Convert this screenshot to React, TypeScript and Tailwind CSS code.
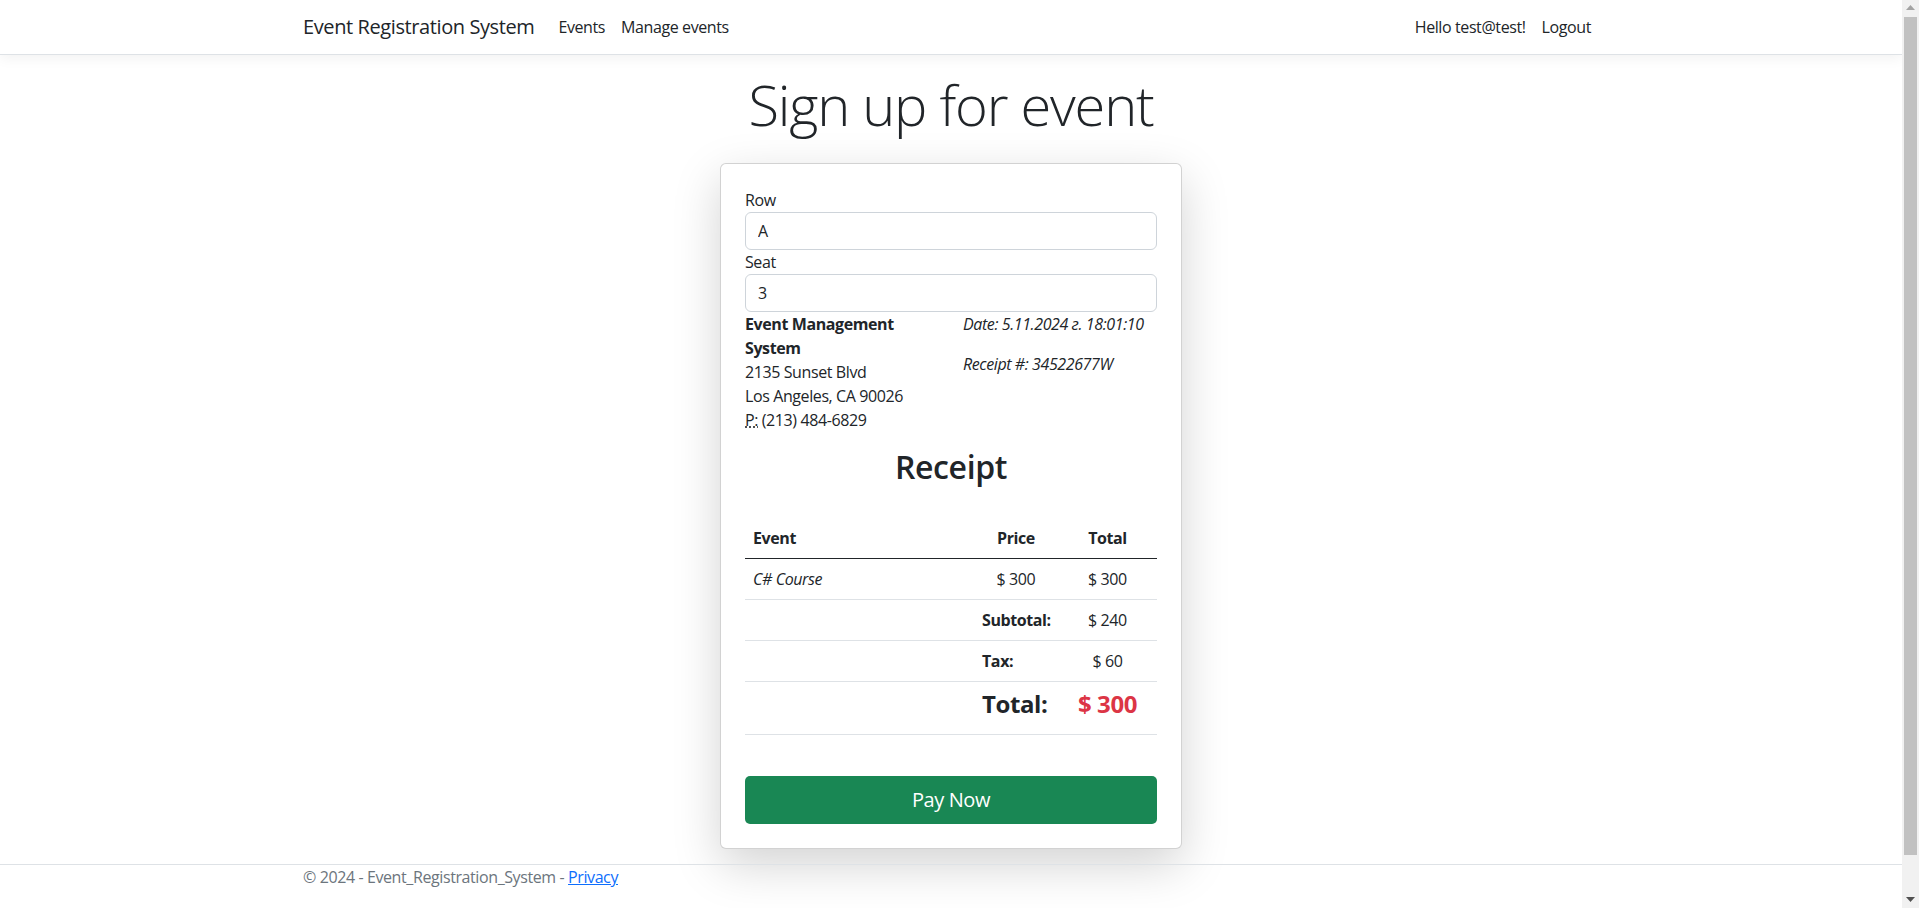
import React from 'react';

const rows = [
  { event: 'C# Course', price: '$ 300', total: '$ 300' },
];

function Navbar() {
  return (
    <nav className="h-[55px] shrink-0 border-b border-[#dee2e6] bg-white shadow-[0_4px_12px_rgba(0,0,0,0.05)]">
      <div className="mx-auto flex h-full w-[1320px] items-center px-3">
        <a className="mr-4 py-[5px] text-[20px] leading-[30px] text-[#212529]">Event Registration System</a>
        <a className="px-2 text-base leading-6 text-[#212529]">Events</a>
        <a className="px-2 text-base leading-6 text-[#212529]">Manage events</a>
        <div className="ml-auto flex items-center">
          <a className="px-2 text-base leading-6 text-[#212529]">Hello test@test!</a>
          <a className="px-2 text-base leading-6 text-[#212529]">Logout</a>
        </div>
      </div>
    </nav>
  );
}

function Field({ label, value }: { label: string; value: string }) {
  return (
    <div>
      <label className="block text-base leading-6">{label}</label>
      <input
        readOnly
        defaultValue={value}
        className="block h-[38px] w-full rounded-md border border-[#ced4da] bg-white px-3 text-base leading-6 text-[#212529] outline-none"
      />
    </div>
  );
}

function ReceiptCard() {
  return (
    <div className="w-[462px] rounded-md border border-black/[0.175] bg-white p-6 shadow-[0_1rem_3rem_rgba(0,0,0,0.175)]">
      <Field label="Row" value="A" />
      <Field label="Seat" value="3" />

      <div className="grid grid-cols-2 gap-x-6">
        <address className="mb-4 not-italic leading-6">
          <strong className="font-bold">Event Management System</strong>
          <br />
          2135 Sunset Blvd
          <br />
          Los Angeles, CA 90026
          <br />
          <abbr title="Phone" className="underline decoration-dotted">P:</abbr> (213) 484-6829
        </address>
        <div className="leading-6">
          <p className="mb-4 italic">Date: 5.11.2024 г. 18:01:10</p>
          <p className="mb-4 italic">Receipt #: 34522677W</p>
        </div>
      </div>

      <h2 className="mb-[31px] text-center text-[32px] font-semibold leading-[1.2]">Receipt</h2>

      <table className="w-full table-fixed border-collapse">
        <thead>
          <tr>
            <th className="w-[229px] border-b border-[#212529] p-2 text-left font-bold leading-6">Event</th>
            <th className="w-[84px] border-b border-[#212529] p-2 text-center font-bold leading-6">Price</th>
            <th className="border-b border-[#212529] p-2 text-center font-bold leading-6">Total</th>
          </tr>
        </thead>
        <tbody>
          {rows.map(r => (
            <tr key={r.event}>
              <td className="border-b border-[#dee2e6] p-2 leading-6 italic">{r.event}</td>
              <td className="border-b border-[#dee2e6] p-2 text-center leading-6">{r.price}</td>
              <td className="border-b border-[#dee2e6] p-2 text-center leading-6">{r.total}</td>
            </tr>
          ))}
          <tr>
            <td className="border-b border-[#dee2e6] p-2 leading-6"></td>
            <td className="whitespace-nowrap border-b border-[#dee2e6] p-2 font-bold leading-6">Subtotal:</td>
            <td className="border-b border-[#dee2e6] p-2 text-center leading-6">$ 240</td>
          </tr>
          <tr>
            <td className="border-b border-[#dee2e6] p-2 leading-6"></td>
            <td className="whitespace-nowrap border-b border-[#dee2e6] p-2 font-bold leading-6">Tax:</td>
            <td className="border-b border-[#dee2e6] p-2 text-center leading-6">$ 60</td>
          </tr>
          <tr>
            <td className="border-b border-[#dee2e6] p-2"></td>
            <td className="whitespace-nowrap border-b border-[#dee2e6] p-2">
              <h4 className="mb-2 text-[24px] font-bold leading-[1.2]">Total:</h4>
            </td>
            <td className="border-b border-[#dee2e6] p-2 text-center">
              <h4 className="mb-2 text-[24px] font-bold leading-[1.2] text-[#dc3545]">$ 300</h4>
            </td>
          </tr>
        </tbody>
      </table>

      <button className="mt-[41px] block h-12 w-full rounded-[5px] bg-[#198754] text-[20px] leading-[30px] text-white">
        Pay Now
      </button>
    </div>
  );
}

function Footer() {
  return (
    <footer className="h-[60px] shrink-0 border-t border-[#dee2e6] text-[#6c757d]">
      <div className="mx-auto w-[1320px] px-3 leading-6">
        © 2024 - Event_Registration_System - <a className="text-[#0d6efd] underline">Privacy</a>
      </div>
    </footer>
  );
}

function Scrollbar() {
  return (
    <div className="flex w-[17px] shrink-0 flex-col bg-[#f1f1f1]">
      <div className="flex h-[15px] items-center justify-center">
        <svg width="9" height="5" viewBox="0 0 9 5"><polygon points="0,5 9,5 4.5,0" fill="#a3a3a3" /></svg>
      </div>
      <div className="mx-[2px] mt-[2px] h-[838px] bg-[#c1c1c1]" />
      <div className="flex-1" />
      <div className="flex h-[17px] items-center justify-center">
        <svg width="9" height="5" viewBox="0 0 9 5"><polygon points="0,0 9,0 4.5,5" fill="#505050" /></svg>
      </div>
    </div>
  );
}

export default function App() {
  return (
    <div className="flex h-[908px] w-full overflow-hidden bg-white font-['Open_Sans',sans-serif] text-base tracking-[-0.025em] text-[#212529]">
      <div className="flex min-w-0 flex-1 flex-col">
        <Navbar />
        <main className="flex h-[809px] shrink-0 flex-col items-center pt-4">
          <h1 className="mb-[25px] text-[56px] font-light leading-[1.2] tracking-[-0.022em]">Sign up for event</h1>
          <ReceiptCard />
        </main>
        <Footer />
      </div>
      <Scrollbar />
    </div>
  );
}
